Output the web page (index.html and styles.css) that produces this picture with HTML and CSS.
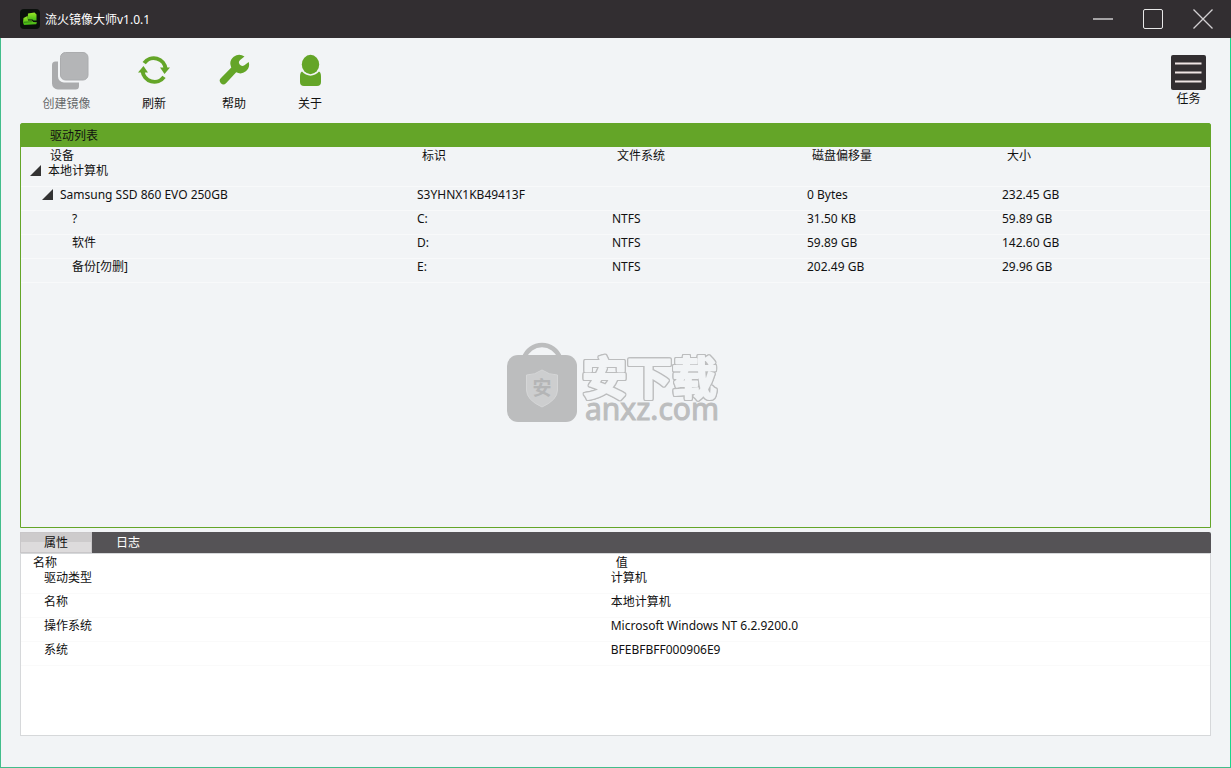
FILE: index.html
```html
<!DOCTYPE html>
<html lang="zh-CN">
<head>
<meta charset="utf-8">
<title>流火镜像大师v1.0.1</title>
<link rel="stylesheet" href="styles.css">
</head>
<body>
<div class="window">
  <header class="titlebar">
    <svg class="app-icon" viewBox="0 0 20 20" aria-hidden="true">
      <defs><linearGradient id="leaf" x1="0" y1="0" x2="0" y2="1"><stop offset="0" stop-color="#9be828"/><stop offset="1" stop-color="#3fb414"/></linearGradient></defs>
      <rect width="20" height="20" rx="4" fill="#0b100c"/>
      <path d="M8 4.500 14.500 3.500 16.500 5.500V11.500h-3l-1-1H7.500Z" fill="url(#leaf)"/>
      <path d="M3.500 9 7.500 7l.5 4.500h4l1 1.500 4 .2-.8 2-12.200.8-1-2.500Z" fill="url(#leaf)"/>
      <path d="M3.500 13.300 12 12.700" stroke="#17600c" stroke-width=".7" fill="none"/>
    </svg>
    <h1 class="app-title">流火镜像大师v1.0.1</h1>
    <div class="window-controls">
      <button class="control" aria-label="最小化"><svg viewBox="0 0 20 20"><path d="M0 10h20" stroke="#a5a3a5" stroke-width="2"/></svg></button>
      <button class="control" aria-label="最大化"><svg viewBox="0 0 20 20"><rect x=".5" y=".5" width="19" height="19" rx="1.500" stroke="#e8e8e8"/></svg></button>
      <button class="control" aria-label="关闭"><svg viewBox="0 0 20 20"><path d="m.5.5 19 19m0-19-19 19" stroke="#d2d0d2" stroke-width="1.300"/></svg></button>
    </div>
  </header>

  <div class="workspace">
    <nav class="toolbar">
      <button class="tool tool-create" disabled>
        <svg class="tool-icon" viewBox="0 0 47 40" aria-hidden="true">
          <path d="M15 11.500h-2.500A3.500 3.500 0 0 0 9 15V33.500a6 6 0 0 0 6 6h17.500A3.500 3.500 0 0 0 36 36V32.500H21a6 6 0 0 1-6-6Z" fill="#aaabad"/>
          <rect x="17.500" y="2.500" width="27.500" height="27.500" rx="5" fill="#b4b5b7" stroke="#abacae"/>
        </svg>
        <span>创建镜像</span>
      </button>
      <button class="tool">
        <svg class="tool-icon" viewBox="0 0 32 40" aria-hidden="true">
          <g fill="none" stroke="#64a528" stroke-width="4">
            <path d="M6.200 13.200A11.800 11.800 0 0 1 27.600 19"/>
            <path d="M26 26.800A11.800 11.800 0 0 1 4.600 21"/>
          </g>
          <path d="M22 17.500h10L26.500 24Z" fill="#64a528"/>
          <path d="M0 22.500h10L5.500 16Z" fill="#64a528"/>
        </svg>
        <span>刷新</span>
      </button>
      <button class="tool">
        <svg class="tool-icon" viewBox="0 0 32 40" aria-hidden="true">
          <path d="M26.500 6.600a8.800 8.800 0 0 0-13.200 10.800L3 28a3.600 3.600 0 0 0 5 5.300L18.200 22.300A8.800 8.800 0 0 0 30.700 12l-4.300 3.300a3.600 3.600 0 0 1-4.700-.8 3.500 3.500 0 0 1 .4-4.600Z" fill="#64a528"/>
        </svg>
        <span>帮助</span>
      </button>
      <button class="tool tool-about">
        <svg class="tool-icon" viewBox="0 0 24 40" aria-hidden="true">
          <path d="M4 21.500C2 22.500 2 25 2 27.500V32q0 4 4 4h13q4 0 4-4v-4.500C23 25 23 22.500 21 21.500c-4.500 5.500-12.500 5.500-17 0Z" fill="#64a528"/>
          <ellipse cx="12.500" cy="14.500" rx="8.700" ry="9.700" fill="#64a528"/>
        </svg>
        <span>关于</span>
      </button>
      <button class="tool tool-tasks">
        <svg class="tasks-icon" viewBox="0 0 35 35" aria-hidden="true">
          <rect width="35" height="35" rx="2" fill="#322e31"/>
          <path d="M4 8.500h26.500M4 17.500h26.500M4 26.500h26.500" stroke="#eee4e4" stroke-width="2"/>
        </svg>
        <span>任务</span>
      </button>
    </nav>

    <main class="panels">
      <section class="drives">
        <h2 class="drives-title">驱动列表</h2>
        <table class="grid drive-grid">
          <colgroup><col><col class="col-data"><col class="col-data"><col class="col-data"><col class="col-size"></colgroup>
          <thead><tr><th class="device-head">设备</th><th>标识</th><th>文件系统</th><th>磁盘偏移量</th><th>大小</th></tr></thead>
          <tbody>
            <tr><td class="level-0"><svg class="expander" viewBox="0 0 12 12"><path d="M12 0v12H0Z"/></svg>本地计算机</td><td></td><td></td><td></td><td></td></tr>
            <tr><td class="level-1"><svg class="expander" viewBox="0 0 12 12"><path d="M12 0v12H0Z"/></svg>Samsung SSD 860 EVO 250GB</td><td>S3YHNX1KB49413F</td><td></td><td>0 Bytes</td><td>232.45 GB</td></tr>
            <tr><td class="level-2">?</td><td>C:</td><td>NTFS</td><td>31.50 KB</td><td>59.89 GB</td></tr>
            <tr><td class="level-2">软件</td><td>D:</td><td>NTFS</td><td>59.89 GB</td><td>142.60 GB</td></tr>
            <tr><td class="level-2">备份[勿删]</td><td>E:</td><td>NTFS</td><td>202.49 GB</td><td>29.96 GB</td></tr>
          </tbody>
        </table>
        <svg class="watermark" viewBox="0 0 216 92" aria-label="安下载 anxz.com">
          <path d="M18 17a19 19 0 0 1 36 0" fill="none" stroke="#bcbdbe" stroke-width="4.500"/>
          <rect x="1" y="14" width="70" height="67" rx="11" fill="#bcbdbe"/>
          <path d="M36 29q7 5 15.500 5v15q0 10-15.500 17-15.500-7-15.500-17V34q8.500 0 15.500-5Z" fill="#cdcecf" stroke="#d5d6d7"/>
          <text class="mark-small" x="36" y="54" text-anchor="middle">安</text>
          <text class="mark-cjk" x="76" y="54">安下载</text>
          <text class="mark-latin" x="79" y="79">anxz.com</text>
        </svg>
      </section>

      <section class="details">
        <div class="tabs" role="tablist">
          <button class="tab tab-active" role="tab" aria-selected="true">属性</button>
          <button class="tab" role="tab" aria-selected="false">日志</button>
        </div>
        <div class="details-body" role="tabpanel">
          <table class="grid detail-grid">
            <colgroup><col class="col-name"><col></colgroup>
            <thead><tr><th class="name-head">名称</th><th>值</th></tr></thead>
            <tbody>
              <tr><td class="name-cell">驱动类型</td><td>计算机</td></tr>
              <tr><td class="name-cell">名称</td><td>本地计算机</td></tr>
              <tr><td class="name-cell">操作系统</td><td>Microsoft Windows NT 6.2.9200.0</td></tr>
              <tr><td class="name-cell">系统</td><td>BFEBFBFF000906E9</td></tr>
            </tbody>
          </table>
        </div>
      </section>
    </main>
  </div>
</div>
</body>
</html>
```
FILE: styles.css
```css
* { box-sizing: border-box; }

body {
  margin: 0;
  color: #111;
  font: 12px/16px "Noto Sans", "Noto Sans CJK SC", sans-serif;
}

button {
  padding: 0;
  border: 0;
  background: none;
  color: inherit;
  font: inherit;
}

.window {
  display: flex;
  flex-direction: column;
  min-height: 100vh;
  background: #f2f4f6;
}

.titlebar {
  display: flex;
  align-items: center;
  height: 38px;
  padding: 0 18px 0 20px;
  background: #322e31;
  color: #fff;
}

.app-icon { width: 20px; height: 20px; }

.app-title {
  margin: 0 0 0 5px;
  padding-top: 2px;
  font-size: 12px;
  font-weight: 400;
}

.window-controls {
  display: flex;
  gap: 30px;
  margin-left: auto;
}

.control { width: 20px; height: 20px; }

.control svg {
  display: block;
  overflow: visible;
  fill: none;
}

.workspace {
  flex: 1;
  display: flex;
  flex-direction: column;
  padding: 0 19px 31px;
  border: 1px solid #42bd8b;
  border-right-color: #1cd68a;
  border-top: 0;
}

.toolbar {
  display: flex;
  align-items: flex-start;
  gap: 48px;
  height: 85px;
  padding: 12px 5px 0 23px;
}

.tool {
  display: flex;
  flex-direction: column;
  align-items: center;
  gap: 6px;
  width: 32px;
  white-space: nowrap;
}

.tool-icon { width: 100%; height: 40px; }
.tool-create { width: 47px; color: #66686a; }
.tool-about { width: 24px; }

.tool-tasks {
  gap: 1px;
  width: 35px;
  margin: 5px 0 0 auto;
}

.tasks-icon { width: 35px; height: 35px; }

.panels {
  flex: 1;
  display: flex;
  flex-direction: column;
  gap: 4px;
}

.drives {
  position: relative;
  flex: 1;
  border: 1px solid #64a528;
  border-radius: 2px 2px 0 0;
}

.drives-title {
  height: 23px;
  margin: 0;
  padding: 4px 0 0 29px;
  background: #64a528;
  font-size: 12px;
  font-weight: 400;
}

.grid {
  width: 100%;
  border-spacing: 0;
  table-layout: fixed;
  text-align: left;
}

.grid th {
  height: 16px;
  padding: 2px 0 0 5px;
  font-weight: 400;
  line-height: 14px;
}

.grid td {
  height: 24px;
  padding: 0 0 7px;
  border-bottom: 1px solid #f8f9fa;
}

.col-data { width: 195px; }
.col-size { width: 208px; }
.grid .device-head { padding-left: 29px; }
.grid .level-0 { padding-left: 9px; }
.grid .level-1 { padding-left: 21px; }
.grid .level-2 { padding-left: 51px; }

.expander {
  width: 11px;
  height: 11px;
  margin-right: 7px;
  fill: #333;
  vertical-align: -1px;
}

.watermark {
  position: absolute;
  top: 50%;
  left: 50%;
  width: 216px;
  height: 92px;
  margin: 15px 0 0 -110px;
  overflow: visible;
}

.mark-small {
  fill: #b4b5b6;
  font: 700 19px "Noto Sans CJK SC", sans-serif;
}

.mark-cjk {
  fill: #f2f4f6;
  stroke: #f2f4f6;
  stroke-width: 2px;
  stroke-linejoin: round;
  filter: drop-shadow(1px 0 #bcbdbe) drop-shadow(-1px 0 #bcbdbe) drop-shadow(0 1px #bcbdbe) drop-shadow(0 -1px #bcbdbe);
  font: 700 45px "Noto Sans CJK SC", sans-serif;
}

.mark-latin {
  fill: #bcbdbe;
  stroke: #bcbdbe;
  stroke-width: 1px;
  font: 30px "Noto Sans", sans-serif;
}

.details {
  display: flex;
  flex-direction: column;
  min-height: 204px;
}

.tabs {
  display: flex;
  height: 21px;
  border-radius: 0 2px 0 0;
  background: #555356;
}

.tab {
  width: 72px;
  color: #fff;
}

.tab-active {
  border: 1px solid #c9c7c9;
  background: linear-gradient(#cdcbcc 45%, #dddbdc 45%);
  color: #111;
}

.details-body {
  flex: 1;
  border: 1px solid #d6d8da;
  background: #fff;
}

.col-name { width: 49.600%; }
.grid .name-head { padding-left: 12px; }
.grid .name-cell { padding-left: 23px; }
.detail-grid td { border-bottom-color: #fafafa; }
```
